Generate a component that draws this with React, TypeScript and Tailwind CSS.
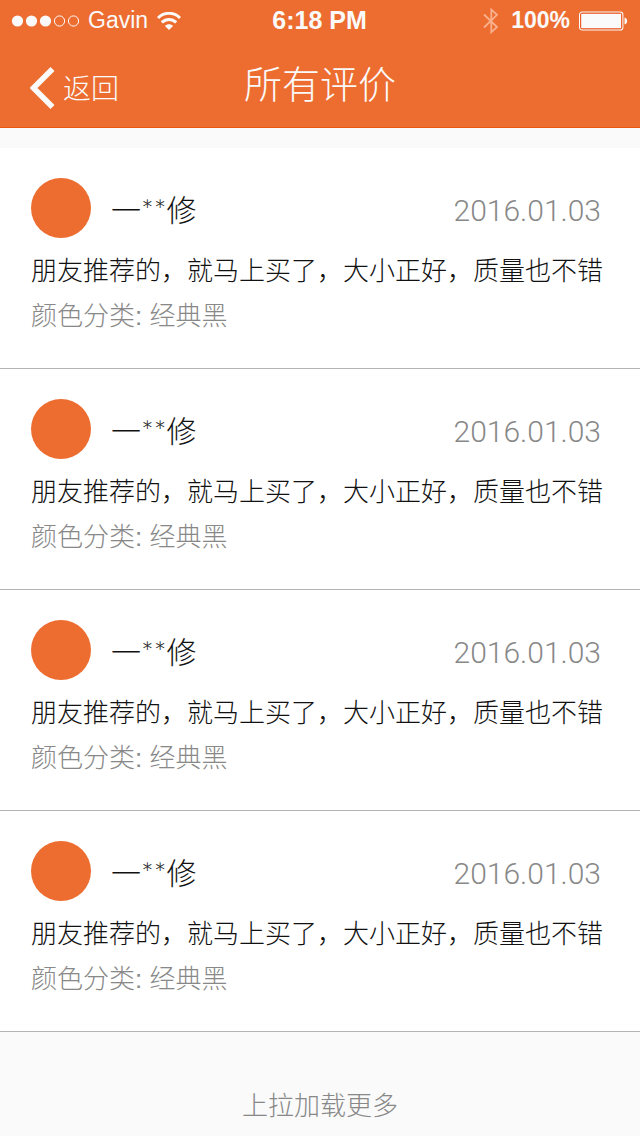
const reviews = [1, 2, 3, 4].map((id) => ({
  id,
  name: '一**修',
  date: '2016.01.03',
  text: '朋友推荐的，就马上买了，大小正好，质量也不错',
  variant: '颜色分类: 经典黑',
}));

function SignalDots() {
  return (
    <svg width="68" height="12" viewBox="0 0 68 12" aria-hidden="true">
      <circle cx="6.500" cy="6" r="5.6" fill="currentColor" />
      <circle cx="20.500" cy="6" r="5.6" fill="currentColor" />
      <circle cx="34.500" cy="6" r="5.6" fill="currentColor" />
      <circle cx="48.500" cy="6" r="5.1" fill="none" stroke="currentColor" />
      <circle cx="62.500" cy="6" r="5.1" fill="none" stroke="currentColor" />
    </svg>
  );
}

function Wifi() {
  return (
    <svg width="24" height="18" viewBox="0 0 24 18" fill="none" stroke="currentColor" strokeWidth="3" aria-hidden="true">
      <path d="M1 6C7.200 -0.200 16.800 -0.200 23 6" />
      <path d="M4.800 10.400C8.900 6.400 15.100 6.400 19.200 10.400" />
      <path d="M12 18L7.900 13.900C10.200 11.600 13.800 11.600 16.100 13.900Z" fill="currentColor" stroke="none" />
    </svg>
  );
}

function Bluetooth() {
  return (
    <svg width="16" height="28" viewBox="0 0 16 28" fill="none" stroke="currentColor" strokeWidth="1.8" aria-hidden="true">
      <path d="M1 7.500L14 20L8.300 25.300V2.500L14 7.800L1 20.500" />
    </svg>
  );
}

function Battery() {
  return (
    <svg width="50" height="20" viewBox="0 0 50 20" aria-hidden="true">
      <rect x="1.600" y="1.100" width="43.200" height="17.800" rx="2.500" fill="none" stroke="currentColor" strokeWidth="1.200" />
      <rect x="2.700" y="2.200" width="41" height="15.600" rx="1.200" fill="currentColor" stroke="#e84a12" strokeWidth="1" />
      <path d="M46.500 6.500C50 7 50 13 46.500 13.500Z" fill="currentColor" />
    </svg>
  );
}

function StatusBar() {
  return (
    <div className="grid h-[41px] grid-cols-[1fr_auto_1fr] items-center pr-3 pl-[11px] text-[23px] font-normal">
      <div className="flex items-center gap-[9px]">
        <SignalDots />
        <span>Gavin</span>
        <Wifi />
      </div>
      <time className="text-[25px] font-bold">6:18 PM</time>
      <div className="flex items-center justify-end gap-2">
        <span className="mr-1 text-[#f9b08c]">
          <Bluetooth />
        </span>
        <span className="font-bold">100%</span>
        <Battery />
      </div>
    </div>
  );
}

export default function App() {
  return (
    <div className="min-h-screen bg-[#fafafa] font-['Liberation_Sans','Noto_Sans_CJK_SC',sans-serif] font-light text-[#111111]">
      <header className="border-b border-[#e8560f] bg-[#ed6d30] text-[#fafafa]">
        <StatusBar />
        <div className="grid h-[86px] grid-cols-[1fr_auto_1fr] items-center px-[30px]">
          <a href="#back" className="mt-2 flex items-center gap-2 justify-self-start text-[28px]">
            <svg width="25" height="42" viewBox="0 0 25 42" fill="none" stroke="currentColor" strokeWidth="5.600" aria-hidden="true">
              <path d="M22.500 2L3.500 21L22.500 40" />
            </svg>
            <span className="pt-1">返回</span>
          </a>
          <h1 className="pt-[3px] text-[38px]">所有评价</h1>
        </div>
      </header>

      <main className="mt-5">
        {reviews.map((r) => (
          <article key={r.id} className="border-b border-[#b3b3b3] bg-white px-[31px] pt-[30px] pb-[29px]">
            <div className="flex items-center">
              <div className="size-[60px] rounded-full bg-[#ed6d30]" />
              <h2 className="ml-5 pt-[2px] font-['Lato','Noto_Sans_CJK_SC',sans-serif] text-[30px]">{r.name}</h2>
              <time className="mr-2 ml-auto pt-1 font-['Roboto',sans-serif] text-[30px] text-[#888888]">{r.date}</time>
            </div>
            <p className="mt-[11px] text-[26px] leading-[45px]">{r.text}</p>
            <p className="text-[26px] leading-[45px] text-[#888888]">{r.variant}</p>
          </article>
        ))}
        <div className="flex justify-center pt-[52px] text-[26px] leading-[45px] text-[#888888]">
          <button type="button">上拉加载更多</button>
        </div>
      </main>
    </div>
  );
}
